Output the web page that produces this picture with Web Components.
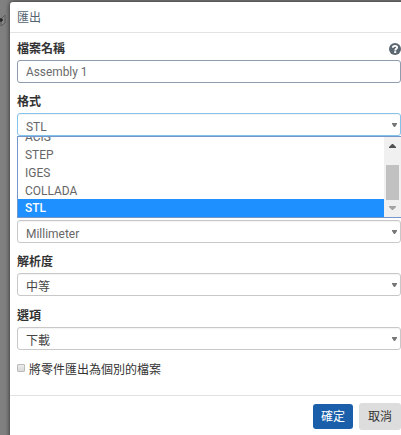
<!DOCTYPE html>
<html lang="zh-Hant">
<head>
<meta charset="utf-8">
<title>匯出</title>
<style>
html,body{margin:0;width:401px;height:435px;overflow:hidden}
body{font:12px/18px Roboto,"Noto Sans CJK TC",sans-serif;color:#333;background:#7b7b7b}
</style>
</head>
<body>
<export-page></export-page>
<script>
const define = (name, html) => customElements.define(name, class extends HTMLElement {
  constructor() {
    super();
    const t = document.createElement('template');
    t.innerHTML = html;
    this.attachShadow({mode: 'open'}).append(t.content.cloneNode(true));
  }
});

define('help-icon', `<style>:host{display:block;width:12px;height:12px}svg{display:block}</style>
<svg width="12" height="12" viewBox="0 0 12 12"><circle cx="6" cy="6" r="6" fill="#5b6770"/><path d="M3.8 4.7C3.9 2.3 8.1 2.3 8.1 4.5 8.1 5.8 6.2 5.8 6.2 7.4" fill="none" stroke="#fff" stroke-width="1.9"/><rect x="5.2" y="8.2" width="2" height="1.8" fill="#fff"/></svg>`);

// Latin text set in a slightly condensed face
define('narrow-text', `<style>
:host{display:inline-block;font-size:13.6px;transform:scaleX(var(--sx,.88));transform-origin:0 50%;white-space:nowrap}
</style><slot></slot>`);

define('dialog-header', `<style>
:host{display:flex;justify-content:space-between;box-sizing:border-box;height:31px;padding:7px 4px 0 7px;border-bottom:1px solid #e2e2e2;color:#566370;line-height:18px}
svg{margin-top:6px}</style><span><slot></slot></span>
<svg width="7" height="7" viewBox="0 0 7 7"><path d="M.7.7 6.3 6.3M6.3.7.7 6.3" stroke="#858585" stroke-width="1.5"/></svg>`);

define('field-label', `<style>
:host{display:flex;justify-content:space-between;align-items:center;height:18px;font-weight:700;color:#333;line-height:18px}
</style><span><slot></slot></span><slot name="help"></slot>`);

define('text-field', `<style>
:host{display:block;box-sizing:border-box;height:23px;border:1px solid #8e9cac;border-radius:3px;padding:0 8px;line-height:20px;color:#6a6a6a}
</style><slot></slot>`);

define('select-field', `<style>
:host{display:flex;justify-content:space-between;box-sizing:border-box;height:23px;border:1px solid var(--edge,#c8c8c8);border-radius:3px;padding:0 3px 0 8px;line-height:var(--line,24px);color:#666;box-shadow:inset 0 1px 1px #0000000d;overflow:hidden}
:host(.cjk){--line:26px;color:#444}
svg{margin-top:9px}</style><span><slot></slot></span>
<svg width="5" height="4" viewBox="0 0 5 4"><path d="M0 0H5V1L3 4H2L0 1Z" fill="#777"/></svg>`);

define('option-row', `<style>
:host{display:block;height:18px;line-height:18px;padding-left:7px;color:#666}
:host([selected]){line-height:16px;background:#1e90ff;color:#fff;font-weight:500}
</style><slot></slot>`);

define('scroll-rail', `<style>
:host{display:flex;flex-direction:column;align-items:center;width:17px;flex:none;background:#f0f0f0}
.thumb{width:13px;height:35px;margin:17px 0 6px;background:#c1c1c1}
svg{flex:none}.up{margin-top:7px}
</style><svg class="up" width="7" height="4"><path d="M0 4V3L3 0H4L7 3V4Z" fill="#505050"/></svg><div class="thumb"></div>
<svg width="7" height="4"><path d="M0 0V1L3 4H4L7 1V0Z" fill="#a3a3a3"/></svg>`);

define('option-list', `<style>
:host{display:flex;position:absolute;z-index:2;top:23px;left:0;width:384px;box-sizing:border-box;height:82px;border:1px solid #7596cb;border-right:0;background:#fff;overflow:hidden}
.rows{flex:1;display:flex;flex-direction:column;justify-content:flex-end;height:80px}
::slotted(*){flex:none}
</style><div class="rows"><slot></slot></div><scroll-rail></scroll-rail>`);

define('check-field', `<style>
:host{display:flex;gap:4px;height:18px;line-height:18px;color:#333}
i{box-sizing:border-box;width:8px;height:8px;margin-top:3px;border:1px solid #bbb;border-radius:1px;background:linear-gradient(#ececec,#d9d9d9)}
</style><i></i><span><slot></slot></span>`);

define('push-button', `<style>
:host{display:block;box-sizing:border-box;width:42px;height:27px;line-height:28px;text-align:center;border-radius:3px;background:#ddd;color:#333}
:host([primary]){width:40px;height:25px;line-height:26px;background:#1b5faa;color:#fff}
</style><slot></slot>`);

define('export-dialog', `<style>
:host{display:block;box-sizing:border-box;width:410px;height:450px;background:#fff;border-radius:3px 0 0 0;box-shadow:0 0 5px #000b}
.body{display:flex;flex-direction:column;height:362px;box-sizing:border-box;padding:7px 0 0 7px;width:391px}
.group{height:53px;flex:none}
.group field-label{margin-bottom:2px}
.group.tall{height:54px}
.anchor{position:relative}
.unit{margin-top:54px;padding-top:20px;box-sizing:border-box}
check-field{margin-top:1px}
footer{display:flex;align-items:center;gap:6px;border-top:1px solid #e2e2e2;padding:7px 0 0 303px}
</style>
<dialog-header>匯出</dialog-header>
<div class="body">
 <div class="group"><field-label>檔案名稱<help-icon slot="help"></help-icon></field-label><text-field><narrow-text style="--sx:.872">Assembly 1</narrow-text></text-field></div>
 <div class="group"><field-label>格式</field-label><div class="anchor"><select-field style="--edge:#83c3e9"><narrow-text>STL</narrow-text></select-field>
  <option-list><option-row><narrow-text>ACIS</narrow-text></option-row><option-row><narrow-text>STEP</narrow-text></option-row><option-row><narrow-text>IGES</narrow-text></option-row><option-row><narrow-text>COLLADA</narrow-text></option-row><option-row selected><narrow-text>STL</narrow-text></option-row></option-list></div></div>
 <div class="group unit"><select-field><narrow-text>Millimeter</narrow-text></select-field></div>
 <div class="group tall"><field-label>解析度</field-label><select-field class="cjk">中等</select-field></div>
 <div class="group"><field-label>選項</field-label><select-field class="cjk">下載</select-field></div>
 <check-field>將零件匯出為個別的檔案</check-field>
</div>
<footer><push-button primary>確定</push-button><push-button>取消</push-button></footer>`);

define('export-page', `<style>
:host{display:block;position:relative;box-sizing:border-box;width:401px;height:435px;overflow:hidden;padding:2px 0 0 10px;background:#808080}
svg{position:absolute;left:0;top:14px}
</style><svg width="6" height="13"><path d="M1 5 5 1V9L1 12Z" fill="#858585" stroke="#5a5a5a"/><path d="M0 6H3M1 4V8" stroke="#222" stroke-width="1.3"/></svg><export-dialog></export-dialog>`);
</script>
</body>
</html>
